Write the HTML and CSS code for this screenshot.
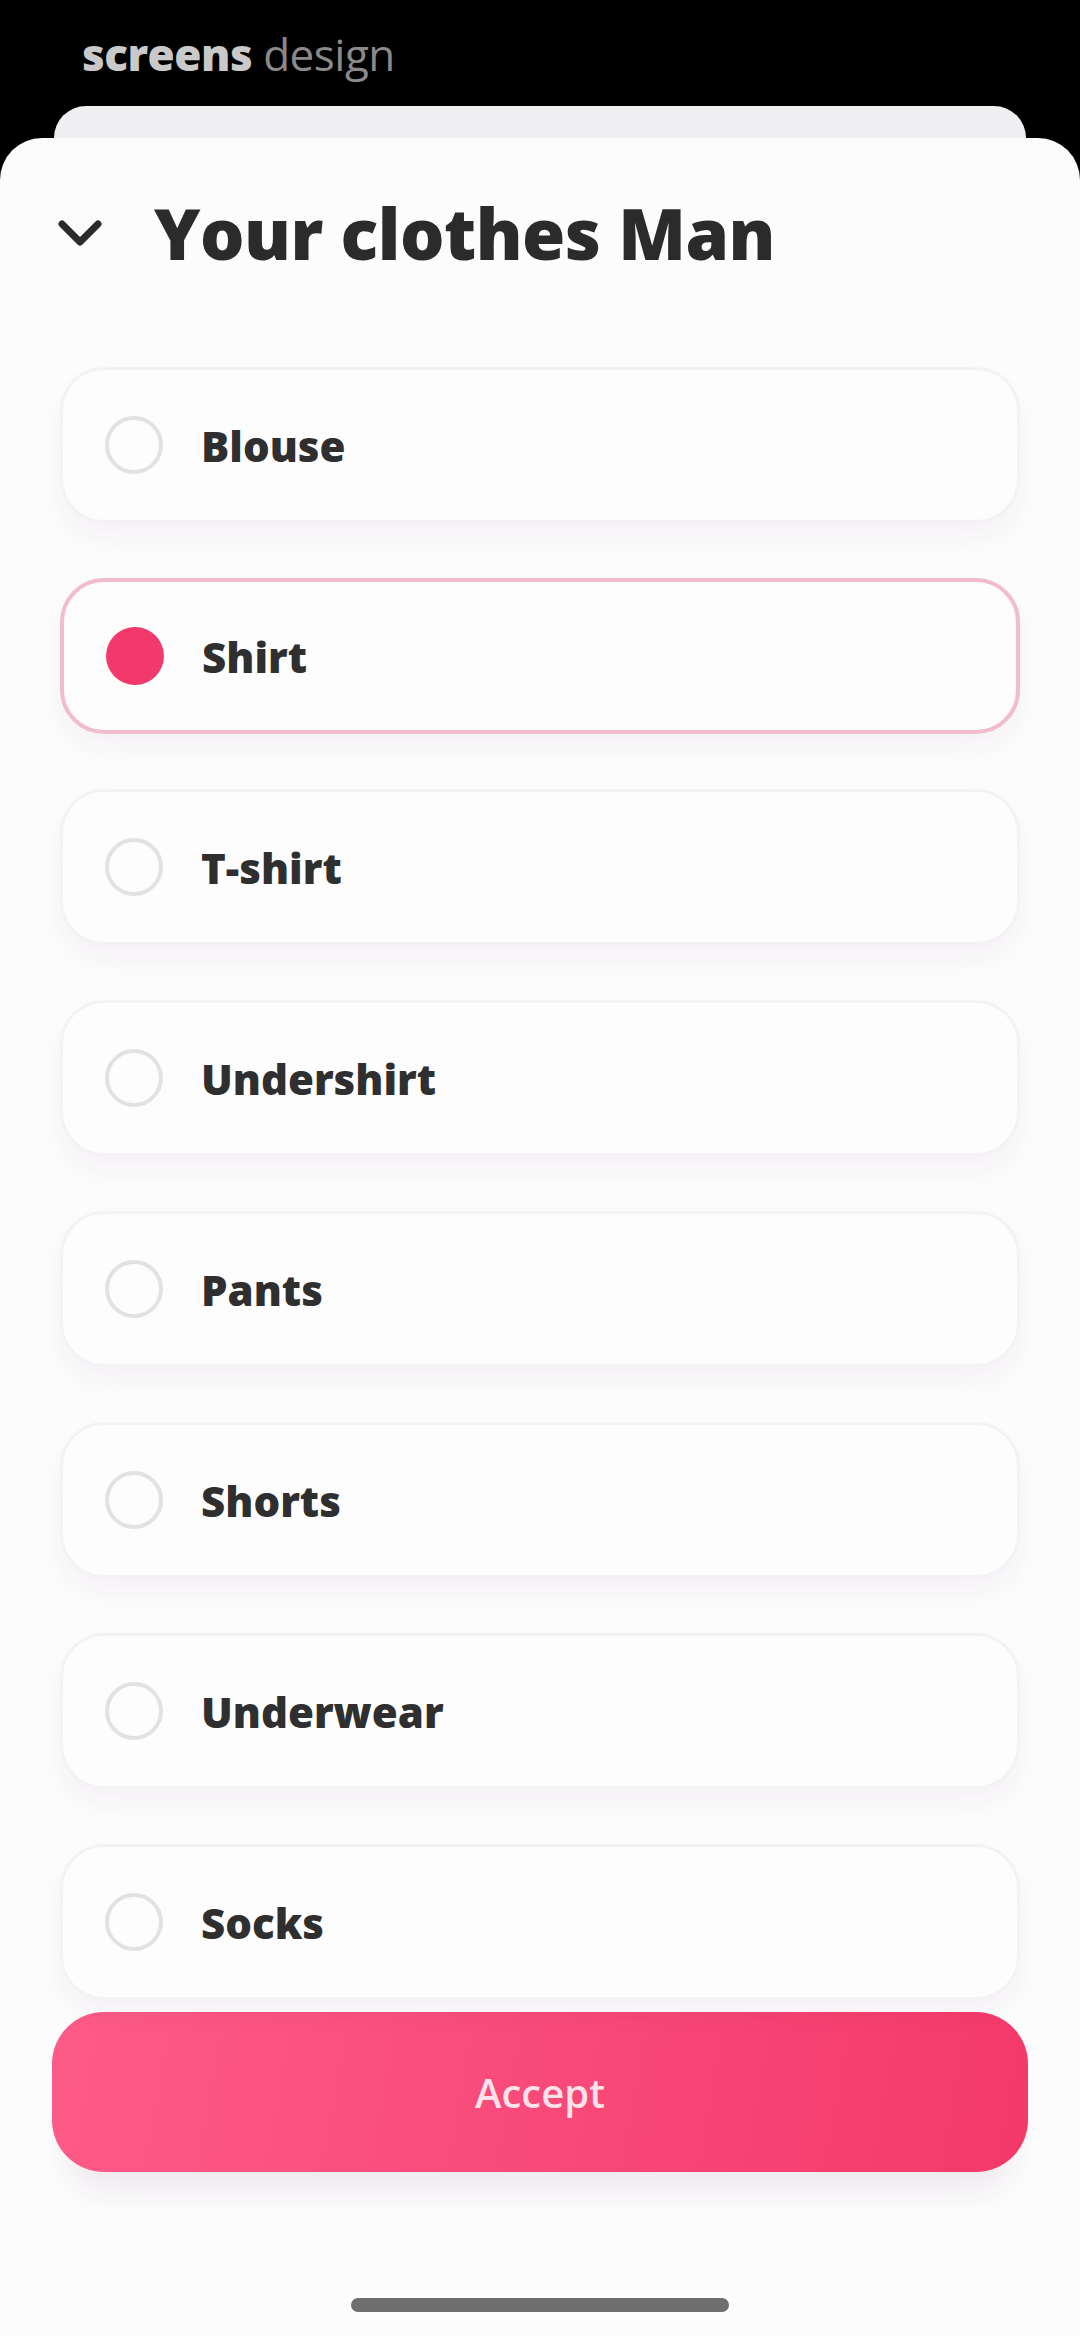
FILE: index.html
```html
<!DOCTYPE html>
<html lang="en">
<head>
  <meta charset="UTF-8" />
  <meta name="viewport" content="width=device-width, initial-scale=1.0"/>
  <title>Your clothes Man</title>
  <link rel="stylesheet" href="styles.css">
</head>
<body>
  <div class="status-bar">
    <span class="brand"><b>screens</b> design</span>
  </div>

  <div class="sheet-back"></div>

  <div class="sheet">
    <div class="sheet-header">
      <svg class="chevron" viewBox="0 0 48 48" width="48" height="48">
        <path d="M6 15 L24 33 L42 15" fill="none" stroke="#2b2b2b" stroke-width="7" stroke-linecap="round" stroke-linejoin="round"/>
      </svg>
      <h1>Your clothes Man</h1>
    </div>

    <div class="option-list">
      <label class="option"><span class="radio"></span><span class="option-label">Blouse</span></label>
      <label class="option selected"><span class="radio"></span><span class="option-label">Shirt</span></label>
      <label class="option"><span class="radio"></span><span class="option-label">T-shirt</span></label>
      <label class="option"><span class="radio"></span><span class="option-label">Undershirt</span></label>
      <label class="option"><span class="radio"></span><span class="option-label">Pants</span></label>
      <label class="option"><span class="radio"></span><span class="option-label">Shorts</span></label>
      <label class="option"><span class="radio"></span><span class="option-label">Underwear</span></label>
      <label class="option"><span class="radio"></span><span class="option-label">Socks</span></label>
    </div>

    <button class="accept-btn">Accept</button>

    <div class="home-indicator"></div>
  </div>
</body>
</html>
```

FILE: styles.css
```css
body {
  margin: 0;
  background: #000;
  font-family: 'Open Sans', 'Liberation Sans', sans-serif;
  color: #2b2b2b;
}

.status-bar {
  height: 106px;
  box-sizing: border-box;
  padding: 24px 0 0 82px;
}

.brand {
  font-size: 44px;
  color: #8a8a8a;
  letter-spacing: -0.5px;
}

.brand b {
  color: #c9c9c9;
  font-weight: 800;
}

.sheet-back {
  height: 32px;
  margin: 0 54px;
  background: #efeef1;
  border-radius: 40px 40px 0 0;
}

.sheet {
  background: #fdfcfd;
  border-radius: 42px 42px 0 0;
  min-height: 2198px;
  padding: 53px 60px 0 60px;
  box-sizing: border-box;
}

.sheet-header {
  display: flex;
  align-items: center;
  gap: 50px;
  height: 84px;
  margin-left: -4px;
}

.chevron {
  flex-shrink: 0;
}

h1 {
  margin: 0;
  font-size: 70px;
  font-weight: 800;
  color: #2b2b2b;
  letter-spacing: -0.5px;
}

.option-list {
  display: flex;
  flex-direction: column;
  gap: 55px;
  margin-top: 92px;
}

.option {
  display: flex;
  align-items: center;
  gap: 38px;
  height: 156px;
  box-sizing: border-box;
  padding-left: 42px;
  background: #fefdfe;
  border: 3px solid #f4f2f5;
  border-radius: 44px;
  box-shadow: 0 14px 26px rgba(40, 20, 40, 0.045);
}

.option.selected {
  border: 4px solid #f1bccd;
}

.radio {
  width: 58px;
  height: 58px;
  border-radius: 50%;
  border: 4px solid #e2e1e4;
  box-sizing: border-box;
  flex-shrink: 0;
}

.option.selected .radio {
  border: none;
  background: #f3386b;
}

.option-label {
  font-size: 42px;
  font-weight: 800;
  color: #2f2f2f;
}

.accept-btn {
  display: block;
  width: calc(100% + 16px);
  margin: 12px -8px 0;
  height: 160px;
  border: none;
  border-radius: 52px;
  background: linear-gradient(100deg, #fd5b89, #f3396a);
  color: rgba(255, 255, 255, 0.85);
  font-family: 'Open Sans', 'Liberation Sans', sans-serif;
  font-size: 40px;
  font-weight: 600;
  box-shadow: 0 34px 30px -14px rgba(40, 20, 40, 0.07);
  cursor: pointer;
}

.home-indicator {
  width: 378px;
  height: 14px;
  margin: 126px auto 0;
  background: #6e6e6e;
  border-radius: 7px;
}
```
